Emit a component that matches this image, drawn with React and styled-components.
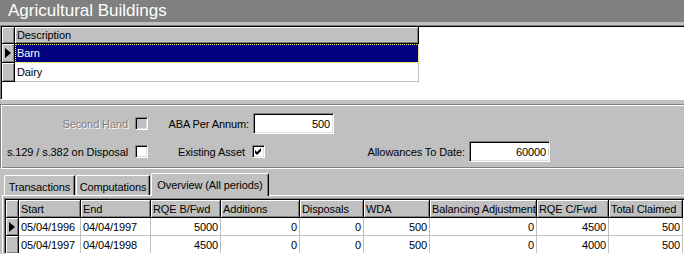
import React from 'react';
import styled, { createGlobalStyle } from 'styled-components';

const Global = createGlobalStyle`
  html, body { margin: 0; padding: 0; background: #c0c0c0; }
  body {
    font-family: "Liberation Sans", Arial, sans-serif;
    font-size: 11px;
    letter-spacing: -0.1px;
    color: #000;
  }
  * { box-sizing: border-box; }
`;

const Screen = styled.div`
  width: 684px;
  height: 254px;
  overflow: hidden;
  background: #c0c0c0;
  display: flex;
  flex-direction: column;
`;

const TitleBar = styled.div`
  height: 22px;
  flex: none;
  background: #808080;
  color: #fff;
  font-size: 17px;
  letter-spacing: 0;
  line-height: 22px;
  padding-left: 8px;
  white-space: nowrap;
`;

/* sunken frame used by both grids */
const GridFrame = styled.div`
  flex: ${p => (p.$fill ? '1' : 'none')};
  height: ${p => (p.$h ? `${p.$h}px` : 'auto')};
  margin: ${p => p.$margin || '0'};
  background: #fff;
  border-top: 1px solid #808080;
  border-left: 1px solid #808080;
  border-bottom: 1px solid #fff;
  padding: 1px 0 0 1px;
  box-shadow: inset 1px 1px 0 #000;
  overflow: hidden;
`;

const Table = styled.div`
  display: grid;
  grid-template-columns: ${p => p.$cols};
  grid-template-rows: ${p => p.$head}px;
  grid-auto-rows: ${p => p.$row}px;
  width: max-content;
`;

const HeadCell = styled.div`
  background: #c0c0c0;
  border-right: 1px solid #000;
  border-bottom: 1px solid #000;
  box-shadow: inset 1px 1px 0 #fff, inset -1px -1px 0 #808080;
  padding-left: 2px;
  display: flex;
  align-items: center;
  white-space: nowrap;
  overflow: hidden;
`;

const Indicator = styled.div`
  background: #c0c0c0;
  border-right: 1px solid #000;
  border-bottom: 1px solid #000;
  box-shadow: inset 1px 1px 0 #fff, inset -1px -1px 0 #808080;
  display: flex;
  align-items: center;
  padding-left: 3px;
`;

const Arrow = styled.span`
  width: 0;
  height: 0;
  border-left: 6px solid #000;
  border-top: 5px solid transparent;
  border-bottom: 5px solid transparent;
`;

const Cell = styled.div`
  background: ${p => (p.$selected ? '#000080' : '#fff')};
  color: ${p => (p.$selected ? '#fff' : '#000')};
  border-right: 1px solid #c0c0c0;
  border-bottom: 1px solid #c0c0c0;
  display: flex;
  align-items: center;
  justify-content: ${p => (p.$right ? 'flex-end' : 'flex-start')};
  padding: ${p => (p.$right ? '0 2px 0 0' : '0 0 0 2px')};
  white-space: nowrap;
  overflow: hidden;
  outline: ${p => (p.$focus ? '1px dotted #ffff80' : 'none')};
  outline-offset: -1px;
`;

const Panel = styled.div`
  flex: none;
  height: 65px;
  margin-top: 4px;
  border-top: 1px solid #808080;
  border-left: 1px solid #808080;
  border-bottom: 1px solid #fff;
  box-shadow: inset 1px 1px 0 #fff, inset 0 -1px 0 #808080;
  padding: 8px 0 0 1px;
  display: flex;
  flex-direction: column;
  gap: 7px;
`;

const FieldRow = styled.div`
  display: flex;
  align-items: center;
  height: 21px;
`;

const Label = styled.div`
  width: ${p => p.$w}px;
  flex: none;
  text-align: right;
  white-space: nowrap;
  margin-right: ${p => p.$gap}px;
  color: ${p => (p.$disabled ? '#808080' : '#000')};
  text-shadow: ${p => (p.$disabled ? '1px 1px 0 #fff' : 'none')};
`;

const Check = styled.div`
  width: 13px;
  height: 13px;
  flex: none;
  background: ${p => (p.$disabled ? '#c0c0c0' : '#fff')};
  border-top: 1px solid #808080;
  border-left: 1px solid #808080;
  border-bottom: 1px solid #fff;
  border-right: 1px solid #fff;
  box-shadow: inset 1px 1px 0 #000, inset -1px -1px 0 #dfdfdf;
  display: flex;
  align-items: center;
  justify-content: center;
`;

const TextBox = styled.div`
  width: 81px;
  height: 21px;
  flex: none;
  background: #fff;
  border-top: 1px solid #808080;
  border-left: 1px solid #808080;
  border-bottom: 1px solid #fff;
  border-right: 1px solid #fff;
  box-shadow: inset 1px 1px 0 #000, inset -1px -1px 0 #dfdfdf;
  display: flex;
  align-items: center;
  justify-content: flex-end;
  padding-right: 3px;
`;

const TabArea = styled.div`
  flex: 1;
  display: flex;
  flex-direction: column;
  min-height: 0;
`;

const TabStrip = styled.div`
  height: 26px;
  flex: none;
  display: flex;
  align-items: flex-end;
  padding-left: 4px;
  gap: 1px;
`;

const Tab = styled.div`
  position: relative;
  z-index: ${p => (p.$active ? 2 : 0)};
  width: ${p => p.$w}px;
  height: ${p => (p.$active ? 23 : 20)}px;
  margin-bottom: ${p => (p.$active ? -1 : 0)}px;
  background: #c0c0c0;
  border-top: 1px solid #fff;
  border-left: 1px solid #fff;
  border-right: 1px solid #000;
  border-radius: 2px 2px 0 0;
  box-shadow: inset -1px 0 0 #808080;
  display: flex;
  align-items: center;
  justify-content: center;
  padding-top: ${p => (p.$active ? 0 : 2)}px;
  white-space: nowrap;
`;

const TabPage = styled.div`
  flex: 1;
  margin-left: 2px;
  border-top: 1px solid #fff;
  border-left: 1px solid #fff;
  padding: 2px 0 0 1px;
  display: flex;
  flex-direction: column;
  min-height: 0;
`;

const CheckMark = () => (
  <svg width="7" height="7" viewBox="0 0 7 7">
    <path d="M0 2 L2 4 L6 0 V3 L2 7 L0 5 Z" fill="#000" />
  </svg>
);

const buildings = ['Barn', 'Dairy'];

const columns = [
  { name: 'Start', w: 62, key: 'start' },
  { name: 'End', w: 70, key: 'end' },
  { name: 'RQE B/Fwd', w: 70, key: 'bfwd', num: true },
  { name: 'Additions', w: 79, key: 'add', num: true },
  { name: 'Disposals', w: 64, key: 'disp', num: true },
  { name: 'WDA', w: 66, key: 'wda', num: true },
  { name: 'Balancing Adjustment', w: 107, key: 'bal', num: true },
  { name: 'RQE C/Fwd', w: 72, key: 'cfwd', num: true },
  { name: 'Total Claimed', w: 74, key: 'total', num: true },
];

const periods = [
  { start: '05/04/1996', end: '04/04/1997', bfwd: 5000, add: 0, disp: 0, wda: 500, bal: 0, cfwd: 4500, total: 500 },
  { start: '05/04/1997', end: '04/04/1998', bfwd: 4500, add: 0, disp: 0, wda: 500, bal: 0, cfwd: 4000, total: 500 },
];

export default function App() {
  const overviewCols = '13px ' + columns.map(c => `${c.w}px`).join(' ');

  return (
    <>
      <Global />
      <Screen>
        <TitleBar>Agricultural Buildings</TitleBar>

        <GridFrame $h={75} $margin="3px 0 0 0">
          <Table $cols="13px 404px" $head={17} $row={19}>
            <Indicator />
            <HeadCell>Description</HeadCell>
            {buildings.map((b, i) => (
              <React.Fragment key={b}>
                <Indicator>{i === 0 && <Arrow />}</Indicator>
                <Cell $selected={i === 0} $focus={i === 0}>{b}</Cell>
              </React.Fragment>
            ))}
          </Table>
        </GridFrame>

        <Panel>
          <FieldRow>
            <Label $w={126} $gap={7} $disabled>Second Hand</Label>
            <Check $disabled />
            <Label $w={101} $gap={4}>ABA Per Annum:</Label>
            <TextBox>500</TextBox>
          </FieldRow>
          <FieldRow>
            <Label $w={126} $gap={7}>s.129 / s.382 on Disposal</Label>
            <Check />
            <Label $w={97} $gap={7}>Existing Asset</Label>
            <Check><CheckMark /></Check>
            <Label $w={200} $gap={4}>Allowances To Date:</Label>
            <TextBox>60000</TextBox>
          </FieldRow>
        </Panel>

        <TabArea>
          <TabStrip>
            <Tab $w={71}>Transactions</Tab>
            <Tab $w={74}>Computations</Tab>
            <Tab $w={118} $active>Overview (All periods)</Tab>
          </TabStrip>
          <TabPage>
            <GridFrame $fill>
              <Table $cols={overviewCols} $head={18} $row={18}>
                <Indicator />
                {columns.map(c => (
                  <HeadCell key={c.key}>{c.name}</HeadCell>
                ))}
                {periods.map((p, i) => (
                  <React.Fragment key={p.start}>
                    <Indicator>{i === 0 && <Arrow />}</Indicator>
                    {columns.map(c => (
                      <Cell key={c.key} $right={c.num}>{p[c.key]}</Cell>
                    ))}
                  </React.Fragment>
                ))}
              </Table>
            </GridFrame>
          </TabPage>
        </TabArea>
      </Screen>
    </>
  );
}
